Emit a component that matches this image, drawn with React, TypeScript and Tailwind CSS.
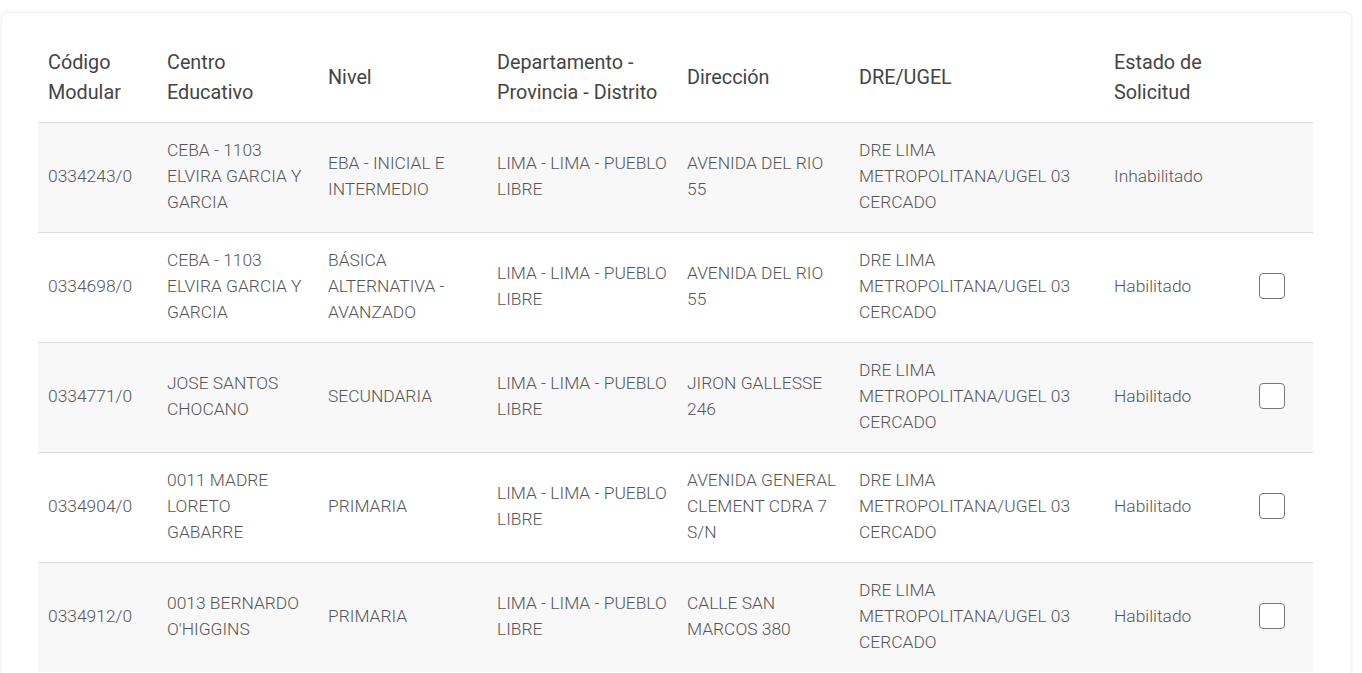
import React from "react";

const rows = [
  { cod: "0334243/0", centro: "CEBA - 1103 ELVIRA GARCIA Y GARCIA", nivel: "EBA - INICIAL E INTERMEDIO", dep: "LIMA - LIMA - PUEBLO LIBRE", dir: "AVENIDA DEL RIO 55", dre: "DRE LIMA METROPOLITANA/UGEL 03 CERCADO", estado: "Inhabilitado", check: false },
  { cod: "0334698/0", centro: "CEBA - 1103 ELVIRA GARCIA Y GARCIA", nivel: "BÁSICA ALTERNATIVA - AVANZADO", dep: "LIMA - LIMA - PUEBLO LIBRE", dir: "AVENIDA DEL RIO 55", dre: "DRE LIMA METROPOLITANA/UGEL 03 CERCADO", estado: "Habilitado", check: true },
  { cod: "0334771/0", centro: "JOSE SANTOS CHOCANO", nivel: "SECUNDARIA", dep: "LIMA - LIMA - PUEBLO LIBRE", dir: "JIRON GALLESSE 246", dre: "DRE LIMA METROPOLITANA/UGEL 03 CERCADO", estado: "Habilitado", check: true },
  { cod: "0334904/0", centro: "0011 MADRE LORETO GABARRE", nivel: "PRIMARIA", dep: "LIMA - LIMA - PUEBLO LIBRE", dir: "AVENIDA GENERAL CLEMENT CDRA 7 S/N", dre: "DRE LIMA METROPOLITANA/UGEL 03 CERCADO", estado: "Habilitado", check: true },
  { cod: "0334912/0", centro: "0013 BERNARDO O'HIGGINS", nivel: "PRIMARIA", dep: "LIMA - LIMA - PUEBLO LIBRE", dir: "CALLE SAN MARCOS 380", dre: "DRE LIMA METROPOLITANA/UGEL 03 CERCADO", estado: "Habilitado", check: true },
];

export default function App() {
  return (
    <div className="h-[673px] bg-white pt-[13px] pl-[2px] pr-[11px] overflow-hidden" style={{ fontFamily: "Roboto, 'Liberation Sans', sans-serif" }}>
      <div className="bg-white rounded-[6px] shadow-[0_0_4px_rgba(0,0,0,0.12)] pl-[36px] pr-[38px] pt-[20px] pb-6">
        <table className="w-[1275px] table-fixed border-collapse">
          <colgroup>
            <col className="w-[119px]" />
            <col className="w-[161px]" />
            <col className="w-[169px]" />
            <col className="w-[190px]" />
            <col className="w-[172px]" />
            <col className="w-[255px]" />
            <col className="w-[145px]" />
            <col className="w-[64px]" />
          </colgroup>
          <thead>
            <tr className="text-[19.8px] leading-[30px] text-[#444] font-normal text-left">
              <th className="font-normal px-[10px] pt-[15px] pb-[14px] align-middle">Código Modular</th>
              <th className="font-normal px-[10px] pt-[15px] pb-[14px] align-middle">Centro Educativo</th>
              <th className="font-normal px-[10px] pt-[15px] pb-[14px] align-middle">Nivel</th>
              <th className="font-normal px-[10px] pt-[15px] pb-[14px] align-middle">Departamento - Provincia - Distrito</th>
              <th className="font-normal px-[10px] pt-[15px] pb-[14px] align-middle">Dirección</th>
              <th className="font-normal px-[10px] pt-[15px] pb-[14px] align-middle">DRE/UGEL</th>
              <th className="font-normal px-[10px] pt-[15px] pb-[14px] align-middle">Estado de Solicitud</th>
              <th className="font-normal px-[10px] pt-[15px] pb-[14px]"></th>
            </tr>
          </thead>
          <tbody>
            {rows.map((r, i) => (
              <tr key={i} className={`border-t border-[#dcdcdc] text-[17.4px] leading-[26px] font-light text-[#555] ${i % 2 === 0 ? "bg-[#f8f8f8]" : "bg-white"}`}>
                <td className="px-[10px] pt-[14px] pb-[17px] align-middle">{r.cod}</td>
                <td className="px-[10px] pt-[14px] pb-[17px] align-middle">{r.centro}</td>
                <td className="px-[10px] pt-[14px] pb-[17px] align-middle">{r.nivel}</td>
                <td className="px-[10px] pt-[14px] pb-[17px] align-middle">{r.dep}</td>
                <td className="px-[10px] pt-[14px] pb-[17px] align-middle">{r.dir}</td>
                <td className="px-[10px] pt-[14px] pb-[17px] align-middle">{r.dre}</td>
                <td className="px-[10px] pt-[14px] pb-[17px] align-middle">{r.estado}</td>
                <td className="px-[10px] pt-[14px] pb-[17px] align-middle">
                  {r.check && <div className="w-[26px] h-[26px] rounded-[4px] border border-[#777] bg-white" />}
                </td>
              </tr>
            ))}
          </tbody>
        </table>
      </div>
    </div>
  );
}
